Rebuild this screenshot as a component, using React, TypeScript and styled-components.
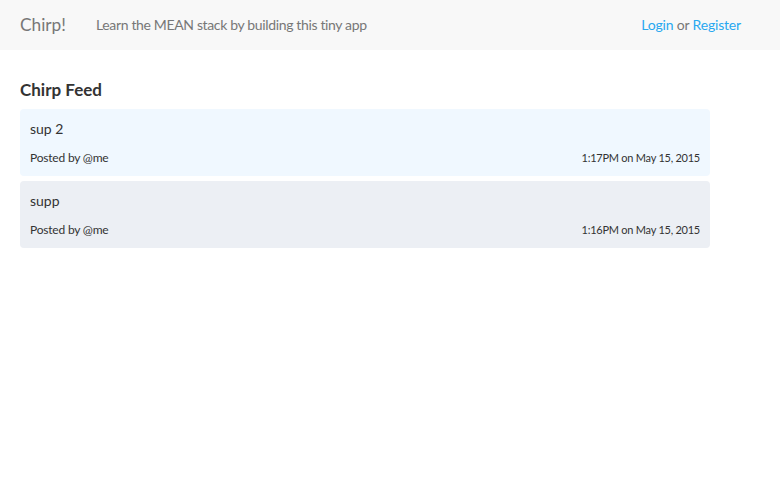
import React from "react";
import styled, { createGlobalStyle } from "styled-components";

const Global = createGlobalStyle`
  html, body { margin: 0; padding: 0; background: #fff; }
  body { font-family: Lato, "Open Sans", "Liberation Sans", sans-serif; color: #333; }
`;

const Navbar = styled.nav`
  height: 50px;
  background: #f8f8f8;
  display: flex;
  align-items: center;
  padding: 0 39px 1px 20px;
  box-sizing: border-box;
`;

const Brand = styled.span`
  font-size: 17.3px;
  color: #777;
  margin-right: 30px;
`;

const Tagline = styled.span`
  font-size: 14px;
  letter-spacing: -0.35px;
  color: #777;
  flex: 1;
`;

const Auth = styled.span`
  font-size: 14px;
  letter-spacing: -0.18px;
  color: #777;
`;

const Link = styled.a`
  color: #28a8f0;
  text-decoration: none;
`;

const Main = styled.main`
  padding: 29px 70px 0 20px;
`;

const Title = styled.h2`
  margin: 0 0 8px;
  font-size: 17px;
  font-weight: 700;
  color: #333;
  line-height: 22px;
`;

const Feed = styled.div`
  display: flex;
  flex-direction: column;
  gap: 5px;
`;

const Card = styled.div<{ $alt?: boolean }>`
  background: ${(p) => (p.$alt ? "#eceff4" : "#f0f8ff")};
  border-radius: 4px;
  height: 67px;
  box-sizing: border-box;
  padding: 11px 10px 0;
  display: flex;
  flex-direction: column;
`;

const Text = styled.div`
  font-size: 14px;
  line-height: 18px;
  color: #333;
`;

const Meta = styled.div`
  display: flex;
  justify-content: space-between;
  align-items: baseline;
  line-height: 16px;
  color: #333;
  margin-top: 12px;
`;

const Author = styled.span`
  font-size: 12px;
  letter-spacing: -0.2px;
`;

const Time = styled.span`
  font-size: 11px;
  letter-spacing: -0.25px;
`;

const posts = [
  { text: "sup 2", by: "@me", time: "1:17PM on May 15, 2015" },
  { text: "supp", by: "@me", time: "1:16PM on May 15, 2015" },
];

export default function App() {
  return (
    <>
      <Global />
      <Navbar>
        <Brand>Chirp!</Brand>
        <Tagline>Learn the MEAN stack by building this tiny app</Tagline>
        <Auth>
          <Link href="#">Login</Link> or <Link href="#">Register</Link>
        </Auth>
      </Navbar>
      <Main>
        <Title>Chirp Feed</Title>
        <Feed>
          {posts.map((p, i) => (
            <Card key={i} $alt={i % 2 === 1}>
              <Text>{p.text}</Text>
              <Meta>
                <Author>Posted by {p.by}</Author>
                <Time>{p.time}</Time>
              </Meta>
            </Card>
          ))}
        </Feed>
      </Main>
    </>
  );
}
